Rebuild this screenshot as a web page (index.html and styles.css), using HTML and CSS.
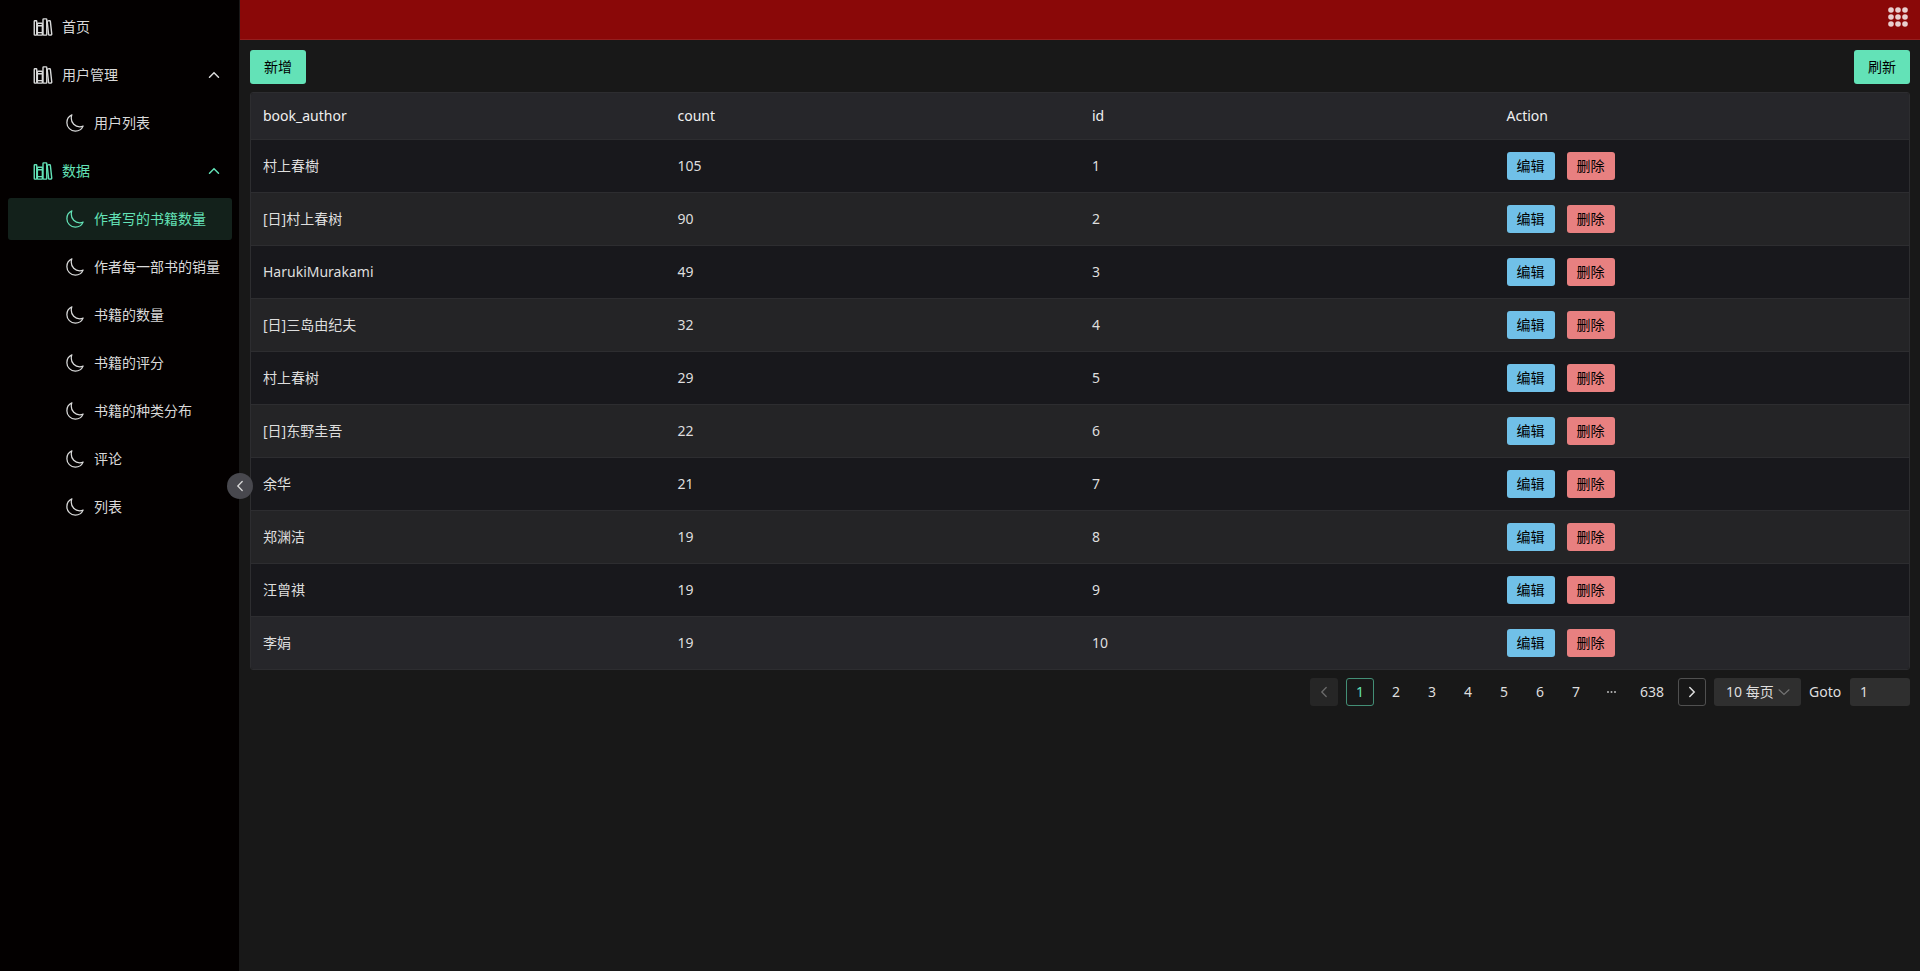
FILE: index.html
```
<!DOCTYPE html>
<html lang="zh-CN">
<head>
    <meta charset="UTF-8">
    <meta name="viewport" content="width=device-width, initial-scale=1.0">
    <title>书籍数据管理</title>
    <link rel="stylesheet" href="styles.css">
</head>
<body>
<!-- shared icons -->
<svg class="icon-defs" aria-hidden="true">
  <symbol id="icon-library" viewBox="0 0 512 512">
    <g fill="none" stroke="currentColor" stroke-width="36" stroke-linejoin="round">
      <rect x="32" y="96" width="64" height="368" rx="16"/>
      <path d="M112 224h128M112 400h128"/>
      <rect x="112" y="160" width="128" height="304" rx="16"/>
      <rect x="256" y="48" width="96" height="416" rx="16"/>
      <path d="M422.46 96.11l-40.4 4.25c-11.12 1.17-19.18 11.57-17.93 23.1l34.92 321.59c1.26 11.53 11.37 20 22.49 18.84l40.4-4.25c11.12-1.17 19.18-11.57 17.93-23.1L445 115c-1.31-11.58-11.42-20.06-22.54-18.89z"/>
    </g>
  </symbol>
  <symbol id="icon-moon" viewBox="0 0 512 512">
    <path d="M160 136c0-30.62 4.51-61.61 16-88C99.57 81.27 48 159.32 48 248c0 119.29 96.71 216 216 216 88.68 0 166.73-51.57 200-128-26.39 11.49-57.38 16-88 16-119.29 0-216-96.71-216-216z" fill="none" stroke="currentColor" stroke-width="32" stroke-linejoin="round"/>
  </symbol>
  <symbol id="icon-up" viewBox="0 0 16 16">
    <path d="M3.5 10.2L8 5.8l4.5 4.4" fill="none" stroke="currentColor" stroke-width="1.5" stroke-linecap="round"/>
  </symbol>
  <symbol id="icon-left" viewBox="0 0 16 16">
    <path d="M10.2 3.5L5.8 8l4.4 4.5" fill="none" stroke="currentColor" stroke-width="1.3" stroke-linecap="round"/>
  </symbol>
  <symbol id="icon-right" viewBox="0 0 16 16">
    <path d="M5.8 3.5L10.2 8l-4.4 4.5" fill="none" stroke="currentColor" stroke-width="1.5" stroke-linecap="round"/>
  </symbol>
  <symbol id="icon-down" viewBox="0 0 16 16">
    <path d="M3 5.8L8 10.5l5-4.7" fill="none" stroke="currentColor" stroke-width="1.2" stroke-linecap="round"/>
  </symbol>
</svg>

<div class="layout">
  <aside class="sider">
    <nav>
      <ul class="menu">
        <li><a class="menu-item" href="#"><svg class="icon"><use href="#icon-library"/></svg><span>首页</span></a></li>
        <li>
          <a class="menu-item" href="#"><svg class="icon"><use href="#icon-library"/></svg><span>用户管理</span><svg class="arrow"><use href="#icon-up"/></svg></a>
          <ul class="submenu">
            <li><a class="menu-item" href="#"><svg class="icon"><use href="#icon-moon"/></svg><span>用户列表</span></a></li>
          </ul>
        </li>
        <li>
          <a class="menu-item open" href="#"><svg class="icon"><use href="#icon-library"/></svg><span>数据</span><svg class="arrow"><use href="#icon-up"/></svg></a>
          <ul class="submenu">
            <li><a class="menu-item selected" href="#"><svg class="icon"><use href="#icon-moon"/></svg><span>作者写的书籍数量</span></a></li>
            <li><a class="menu-item" href="#"><svg class="icon"><use href="#icon-moon"/></svg><span>作者每一部书的销量</span></a></li>
            <li><a class="menu-item" href="#"><svg class="icon"><use href="#icon-moon"/></svg><span>书籍的数量</span></a></li>
            <li><a class="menu-item" href="#"><svg class="icon"><use href="#icon-moon"/></svg><span>书籍的评分</span></a></li>
            <li><a class="menu-item" href="#"><svg class="icon"><use href="#icon-moon"/></svg><span>书籍的种类分布</span></a></li>
            <li><a class="menu-item" href="#"><svg class="icon"><use href="#icon-moon"/></svg><span>评论</span></a></li>
            <li><a class="menu-item" href="#"><svg class="icon"><use href="#icon-moon"/></svg><span>列表</span></a></li>
          </ul>
        </li>
      </ul>
    </nav>
    <button type="button" class="collapse-btn" aria-label="收起菜单"><svg><use href="#icon-left"/></svg></button>
  </aside>

  <div class="main">
    <header class="header">
      <button type="button" class="apps-btn" aria-label="应用">
        <svg viewBox="0 0 20 20" fill="currentColor">
          <circle cx="3" cy="3" r="2.8"/><circle cx="10" cy="3" r="2.8"/><circle cx="17" cy="3" r="2.8"/>
          <circle cx="3" cy="10" r="2.8"/><circle cx="10" cy="10" r="2.8"/><circle cx="17" cy="10" r="2.8"/>
          <circle cx="3" cy="17" r="2.8"/><circle cx="10" cy="17" r="2.8"/><circle cx="17" cy="17" r="2.8"/>
        </svg>
      </button>
    </header>

    <main class="content">
      <div class="toolbar">
        <button type="button" class="btn primary">新增</button>
        <button type="button" class="btn primary">刷新</button>
      </div>

      <div class="table-wrap">
        <table class="table">
          <thead>
            <tr><th>book_author</th><th>count</th><th>id</th><th>Action</th></tr>
          </thead>
          <tbody>
            <tr>
              <td>村上春樹</td><td>105</td><td>1</td>
              <td><div class="actions"><button type="button" class="btn small info">编辑</button><button type="button" class="btn small error">删除</button></div></td>
            </tr>
            <tr>
              <td>[日]村上春树</td><td>90</td><td>2</td>
              <td><div class="actions"><button type="button" class="btn small info">编辑</button><button type="button" class="btn small error">删除</button></div></td>
            </tr>
            <tr>
              <td>HarukiMurakami</td><td>49</td><td>3</td>
              <td><div class="actions"><button type="button" class="btn small info">编辑</button><button type="button" class="btn small error">删除</button></div></td>
            </tr>
            <tr>
              <td>[日]三岛由纪夫</td><td>32</td><td>4</td>
              <td><div class="actions"><button type="button" class="btn small info">编辑</button><button type="button" class="btn small error">删除</button></div></td>
            </tr>
            <tr>
              <td>村上春树</td><td>29</td><td>5</td>
              <td><div class="actions"><button type="button" class="btn small info">编辑</button><button type="button" class="btn small error">删除</button></div></td>
            </tr>
            <tr>
              <td>[日]东野圭吾</td><td>22</td><td>6</td>
              <td><div class="actions"><button type="button" class="btn small info">编辑</button><button type="button" class="btn small error">删除</button></div></td>
            </tr>
            <tr>
              <td>余华</td><td>21</td><td>7</td>
              <td><div class="actions"><button type="button" class="btn small info">编辑</button><button type="button" class="btn small error">删除</button></div></td>
            </tr>
            <tr>
              <td>郑渊洁</td><td>19</td><td>8</td>
              <td><div class="actions"><button type="button" class="btn small info">编辑</button><button type="button" class="btn small error">删除</button></div></td>
            </tr>
            <tr>
              <td>汪曾祺</td><td>19</td><td>9</td>
              <td><div class="actions"><button type="button" class="btn small info">编辑</button><button type="button" class="btn small error">删除</button></div></td>
            </tr>
            <tr class="current">
              <td>李娟</td><td>19</td><td>10</td>
              <td><div class="actions"><button type="button" class="btn small info">编辑</button><button type="button" class="btn small error">删除</button></div></td>
            </tr>
          </tbody>
        </table>
      </div>

      <div class="pagination">
        <button type="button" class="page disabled" aria-label="上一页" disabled><svg><use href="#icon-left"/></svg></button>
        <button type="button" class="page active">1</button>
        <button type="button" class="page">2</button>
        <button type="button" class="page">3</button>
        <button type="button" class="page">4</button>
        <button type="button" class="page">5</button>
        <button type="button" class="page">6</button>
        <button type="button" class="page">7</button>
        <button type="button" class="page" aria-label="更多">
          <svg class="more" viewBox="0 0 16 16" fill="currentColor"><circle cx="4" cy="8" r="1"/><circle cx="7.5" cy="8" r="1"/><circle cx="11" cy="8" r="1"/></svg>
        </button>
        <button type="button" class="page">638</button>
        <button type="button" class="page next" aria-label="下一页"><svg><use href="#icon-right"/></svg></button>
        <div class="page-size">
          <select aria-label="每页条数"><option>10 每页</option></select>
          <svg><use href="#icon-down"/></svg>
        </div>
        <label for="goto">Goto</label>
        <input type="text" id="goto" class="goto" value="1">
      </div>
    </main>
  </div>
</div>
</body>
</html>
```
FILE: styles.css
```
* {
  box-sizing: border-box;
}
body {
  margin: 0;
  font-family: "Noto Sans", "Noto Sans CJK SC", sans-serif;
  font-size: 14px;
  line-height: 22px;
  color: #dedede;
  background-color: #181818;
}
button, select, input {
  font: inherit;
  color: inherit;
}
button {
  padding: 0;
  border: none;
  background: none;
  cursor: pointer;
}
svg {
  display: block;
  flex: none;
  width: 16px;
  height: 16px;
}
.icon-defs {
  display: none;
}
.layout {
  display: flex;
  min-height: 100vh;
}

/* sidebar */
.sider {
  position: relative;
  flex: none;
  width: 240px;
  background-color: #030000;
  border-right: 1px solid #181818;
}
.menu, .submenu {
  list-style: none;
  margin: 0;
  padding: 0;
}
.menu-item {
  display: flex;
  align-items: center;
  gap: 9px;
  height: 42px;
  margin: 6px 7px 0 8px;
  padding: 0 10px 0 25px;
  border-radius: 3px;
  color: #dadada;
  text-decoration: none;
  white-space: nowrap;
}
.submenu .menu-item {
  padding-left: 57px;
}
.menu-item .icon {
  width: 20px;
  height: 20px;
}
.menu-item .arrow {
  margin-left: auto;
}
.menu-item.open, .menu-item.selected {
  color: #63e2b7;
}
.menu-item.selected {
  background-color: #13211b;
}
.collapse-btn {
  position: absolute;
  top: 50%;
  right: -14px;
  display: flex;
  align-items: center;
  justify-content: center;
  width: 26px;
  height: 26px;
  margin-top: -13px;
  border-radius: 50%;
  background-color: #48484e;
  color: #dadada;
}

/* header */
.main {
  flex: 1;
  min-width: 0;
}
.header {
  display: flex;
  justify-content: flex-end;
  height: 40px;
  padding: 7px 12px;
  background-color: #8a0808;
  border-bottom: 1px solid #941e1e;
}
.apps-btn {
  height: 20px;
  color: #e9cfcf;
}
.apps-btn svg {
  width: 20px;
  height: 20px;
}

.content {
  padding: 10px;
}
.toolbar {
  display: flex;
  justify-content: space-between;
  margin-bottom: 8px;
}
.btn {
  height: 34px;
  padding: 0 14px;
  border-radius: 3px;
  color: #000;
}
.btn.small {
  height: 28px;
  padding: 0 10px;
}
.primary {
  background-color: #63e2b7;
}
.info {
  background-color: #70c0e8;
}
.error {
  background-color: #e88080;
}

/* table */
.table-wrap {
  border: 1px solid #2d2d30;
  border-radius: 3px;
  overflow: hidden;
}
.table {
  width: 100%;
  table-layout: fixed;
  border-collapse: separate;
  border-spacing: 0;
}
.table th, .table td {
  padding: 12px;
  text-align: left;
  font-weight: 400;
  border-bottom: 1px solid #2d2d30;
}
.table th {
  color: #f0f0f0;
  background-color: #26262a;
}
.table td {
  background-color: #18181c;
}
.table tr:nth-child(even) td {
  background-color: #242426;
}
.table tr.current td {
  background-color: #26262a;
}
.table tr:last-child td {
  border-bottom: none;
}
.actions {
  display: flex;
  gap: 12px;
}

/* pagination */
.pagination {
  display: flex;
  justify-content: flex-end;
  align-items: center;
  gap: 8px;
  margin-top: 8px;
}
.pagination label {
  min-width: 33px;
}
.page {
  display: flex;
  align-items: center;
  justify-content: center;
  min-width: 28px;
  height: 28px;
  padding: 0 5px;
  border: 1px solid transparent;
  border-radius: 3px;
}
.page.active {
  color: #63e2b7;
  border-color: #438f76;
}
.page.disabled {
  color: #6b6b6b;
  background-color: #262626;
}
.page.next {
  border-color: #505050;
}
.page .more {
  color: #b8b8b8;
}
.page-size {
  position: relative;
}
.page-size select {
  display: block;
  width: 87px;
  height: 28px;
  padding: 0 12px;
  border: none;
  border-radius: 3px;
  appearance: none;
  background-color: #2f2f2f;
}
.page-size svg {
  position: absolute;
  top: 6px;
  right: 9px;
  color: #747474;
  pointer-events: none;
}
.goto {
  width: 60px;
  height: 28px;
  padding: 0 10px 2px;
  border: none;
  border-radius: 3px;
  background-color: #2f2f2f;
}
```
